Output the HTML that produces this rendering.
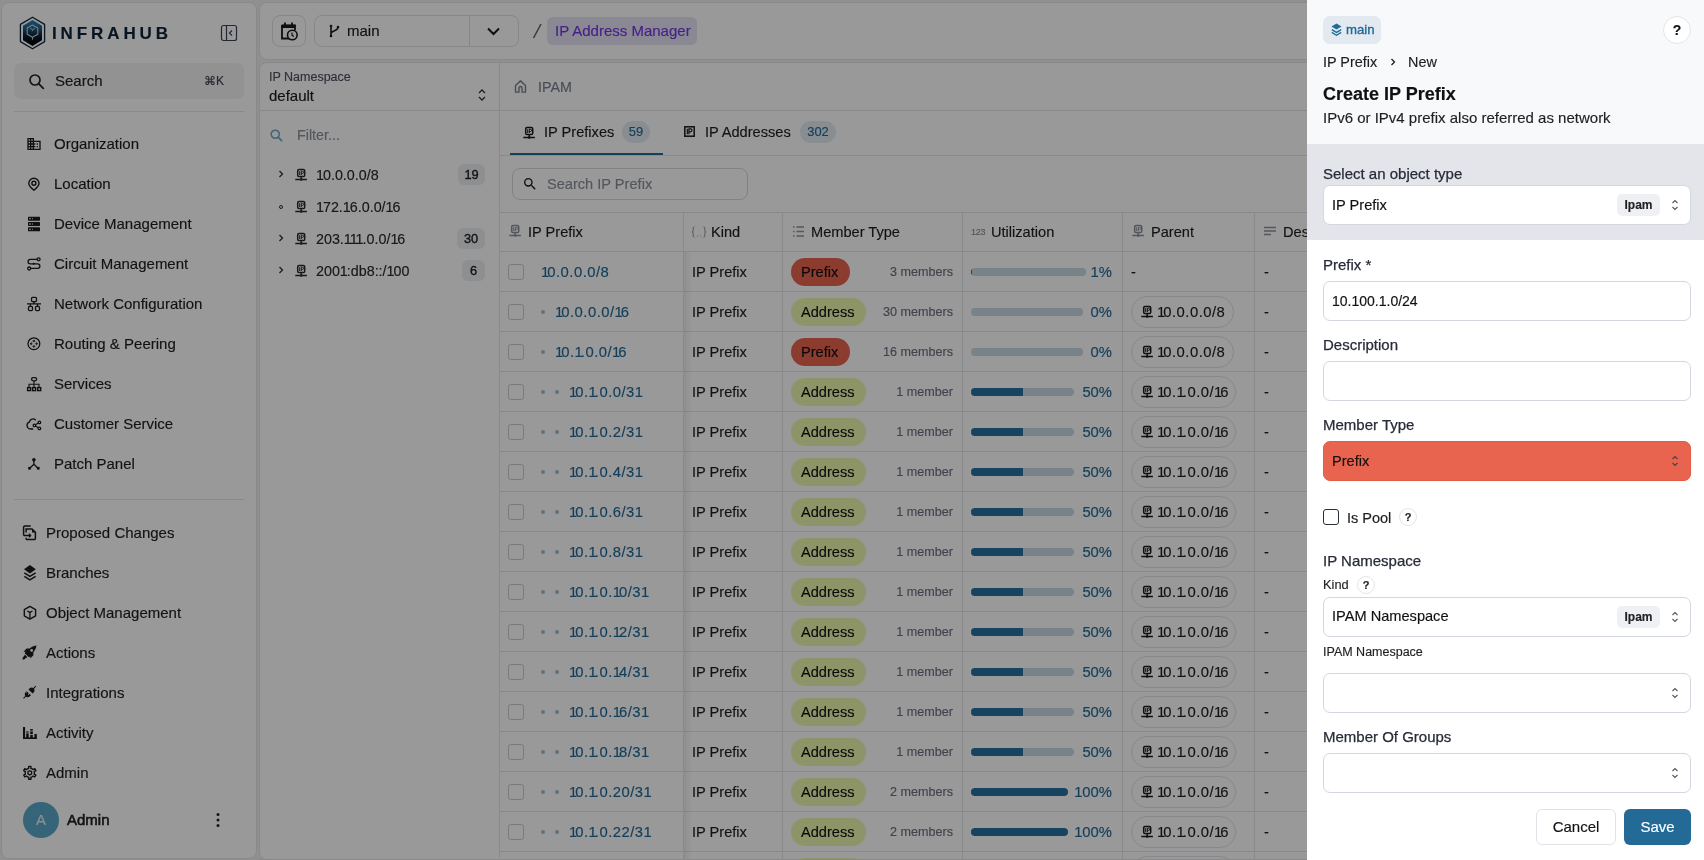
<!DOCTYPE html>
<html><head><meta charset="utf-8">
<style>
*{box-sizing:border-box;margin:0;padding:0}
html,body{width:1704px;height:860px;overflow:hidden}
body{font-family:"Liberation Sans",sans-serif;background:#f1f1f1;color:#1a1a1a;position:relative}
.abs{position:absolute}
#root{-webkit-text-stroke:0.15px}
.card{position:absolute;background:#fff;border:1px solid #e2e4e8;border-radius:8px}
/* sidebar */
#side{left:1px;top:2px;width:256px;height:857px}
.nav{position:absolute;left:0;height:40px;display:flex;align-items:center;font-size:15px;color:#1f1f1f;white-space:nowrap}
.nav svg{position:absolute}
/* overlay */
#ov{position:absolute;left:0;top:0;width:1307px;height:860px;background:rgba(0,0,0,0.4)}
#panel{position:absolute;left:1307px;top:0;width:397px;height:860px;background:#fff}
.lbl{font-size:15px;line-height:20px;color:#272b38;-webkit-text-stroke:0.25px #272b38;white-space:nowrap}
.sel{width:368px;border:1px solid #d5d7e0;border-radius:7px;background:#fff}
.ipam{width:43px;height:22px;border-radius:5px;background:#eef0f4;font-size:12px;font-weight:bold;line-height:22px;text-align:center;color:#222}
.qm{width:18px;height:18px;border-radius:50%;border:1px solid #e3e5ea;background:#fff;font-size:11px;font-weight:bold;line-height:16px;text-align:center;color:#222}
.n1{letter-spacing:-2px}
.tr .n1{letter-spacing:-1px}
.tr{left:316px;font-size:14.3px;line-height:20px;color:#2a2a2a}
.tb{height:21px;border-radius:6px;background:#eceef1;font-size:12.8px;-webkit-text-stroke:0.35px #222;line-height:21px;text-align:center;color:#222}
</style></head><body><div id="root" style="position:absolute;left:0;top:0;width:1704px;height:860px;will-change:transform">

<!-- SIDEBAR -->
<div class="card" id="side"></div>
<svg class="abs" style="left:19px;top:16px" width="27" height="34" viewBox="0 0 27 34">
  <defs><linearGradient id="lg" x1="0" y1="0" x2="0" y2="1"><stop offset="0" stop-color="#2c80b8"/><stop offset="0.3" stop-color="#1f618f"/><stop offset="0.62" stop-color="#0b1c2e"/><stop offset="1" stop-color="#000"/></linearGradient></defs>
  <polygon points="13.5,1.2 25.6,8.4 25.6,25.6 13.5,32.8 1.4,25.6 1.4,8.4" fill="none" stroke="#10263e" stroke-width="1.3" stroke-linejoin="round"/>
  <polygon points="13.5,4 23,9.8 23,24.2 13.5,30 4,24.2 4,9.8" fill="url(#lg)"/>
  <path d="M13.5 9 L18.8 12 L18.8 18.2 L13.5 21.2 L8.2 18.2 L8.2 12 Z" fill="none" stroke="#c9d2da" stroke-width="1.1" stroke-linejoin="round"/><path d="M11 12.3 L13.5 13.6 L16 12.3 M13.5 13.6 V15" fill="none" stroke="#c9d2da" stroke-width="0.9"/>
  <path d="M13.5 21.2 V23.6" fill="none" stroke="#c9d2da" stroke-width="1.1"/>
</svg>
<div class="abs" style="left:52px;top:24px;font-size:17px;font-weight:bold;letter-spacing:3.9px;color:#0d2237;line-height:20px">INFRAHUB</div>
<svg class="abs" style="left:220px;top:24px" width="18" height="18" viewBox="0 0 18 18"><rect x="1.5" y="1.5" width="15" height="15" rx="2" fill="none" stroke="#3d4152" stroke-width="1.2"/><path d="M6.5 1.5 V16.5" stroke="#3d4152" stroke-width="1.2"/><path d="M12 6.5 L9.5 9 L12 11.5" fill="none" stroke="#3d4152" stroke-width="1.2"/></svg>

<div class="abs" style="left:14px;top:63px;width:230px;height:36px;background:#f4f4f5;border-radius:7px"></div>
<svg class="abs" style="left:28px;top:73px" width="17" height="17" viewBox="0 0 17 17"><circle cx="7" cy="7" r="5" fill="none" stroke="#222" stroke-width="1.7"/><path d="M10.8 10.8L15.3 15.3" stroke="#222" stroke-width="1.8" stroke-linecap="round"/></svg>
<div class="abs" style="left:55px;top:71px;font-size:15px;line-height:20px;color:#222">Search</div>
<div class="abs" style="left:204px;top:73px;font-size:12px;line-height:16px;color:#3e4250">&#8984;K</div>
<div class="abs" style="left:14px;top:111px;width:230px;height:1px;background:#e2e4e8"></div>

<div class="nav" style="top:123px;left:54px">Organization</div>
<div class="nav" style="top:163px;left:54px">Location</div>
<div class="nav" style="top:203px;left:54px">Device Management</div>
<div class="nav" style="top:243px;left:54px">Circuit Management</div>
<div class="nav" style="top:283px;left:54px">Network Configuration</div>
<div class="nav" style="top:323px;left:54px">Routing &amp; Peering</div>
<div class="nav" style="top:363px;left:54px">Services</div>
<div class="nav" style="top:403px;left:54px">Customer Service</div>
<div class="nav" style="top:443px;left:54px">Patch Panel</div>

<!-- upper icons -->
<svg class="abs" style="left:26px;top:136px" width="16" height="16" viewBox="0 0 24 24"><path d="M18 15h-2v2h2m0-6h-2v2h2m2 6h-8v-2h2v-2h-2v-2h2v-2h-2V9h8M10 7H8V5h2m0 6H8V9h2m0 6H8v-2h2m0 6H8v-2h2M6 7H4V5h2m0 6H4V9h2m0 6H4v-2h2m0 6H4v-2h2m6-10V3H2v18h20V7H12z" fill="#1c1c1c"/></svg>
<svg class="abs" style="left:20px;top:172px" width="24" height="24" viewBox="0 0 24 24"><path d="M13.9 18.3C11 16 8.8 14 8.8 11.3A5.1 5.1 0 0 1 19 11.3C19 14 16.8 16 13.9 18.3Z" fill="none" stroke="#1c1c1c" stroke-width="1.4" stroke-linejoin="round"/><circle cx="13.9" cy="11.3" r="2" fill="none" stroke="#1c1c1c" stroke-width="1.4"/></svg>
<svg class="abs" style="left:26px;top:216px" width="16" height="16" viewBox="0 0 24 24"><path d="M4 1h16a1 1 0 0 1 1 1v4a1 1 0 0 1-1 1H4a1 1 0 0 1-1-1V2a1 1 0 0 1 1-1m0 8h16a1 1 0 0 1 1 1v4a1 1 0 0 1-1 1H4a1 1 0 0 1-1-1v-4a1 1 0 0 1 1-1m0 8h16a1 1 0 0 1 1 1v4a1 1 0 0 1-1 1H4a1 1 0 0 1-1-1v-4a1 1 0 0 1 1-1M9 5h1V3H9v2m0 8h1v-2H9v2m0 8h1v-2H9v2M5 3v2h2V3H5m0 8v2h2v-2H5m0 8v2h2v-2H5z" fill="#1c1c1c"/></svg>
<svg class="abs" style="left:20px;top:252px" width="24" height="24" viewBox="0 0 24 24"><circle cx="18.6" cy="7.3" r="1.5" fill="none" stroke="#1c1c1c" stroke-width="1.3"/><path d="M17.1 7.3H10.3A2.25 2.25 0 0 0 10.3 11.8H17.6A2.3 2.3 0 0 1 17.6 16.4H10.7" fill="none" stroke="#1c1c1c" stroke-width="1.3"/><circle cx="9.2" cy="16.5" r="1.5" fill="none" stroke="#1c1c1c" stroke-width="1.3"/><path d="M13.8 10.5L15.1 11.8 13.8 13.1 12.5 11.8Z" fill="#1c1c1c"/></svg>
<svg class="abs" style="left:20px;top:292px" width="24" height="24" viewBox="0 0 24 24"><rect x="11.5" y="5.4" width="5" height="4.2" rx="1.1" fill="none" stroke="#1c1c1c" stroke-width="1.3"/><path d="M14 9.6V11.8M7 11.9H21" stroke="#1c1c1c" stroke-width="1.4"/><path d="M10.4 11.9V14.2M17.5 11.9V14.2" stroke="#1c1c1c" stroke-width="1.2"/><rect x="8.5" y="14.4" width="4" height="4.2" rx="1.1" fill="none" stroke="#1c1c1c" stroke-width="1.3"/><rect x="15.5" y="14.4" width="4" height="4.2" rx="1.1" fill="none" stroke="#1c1c1c" stroke-width="1.3"/></svg>
<svg class="abs" style="left:20px;top:332px" width="24" height="24" viewBox="0 0 24 24"><circle cx="13.9" cy="11.7" r="5.9" fill="none" stroke="#1c1c1c" stroke-width="1.3"/><path d="M13.9 7.9l1.2 1.3h-2.4zM13.9 15.5l-1.2-1.3h2.4zM10.1 11.7l1.3-1.2v2.4zM17.7 11.7l-1.3 1.2v-2.4z" fill="#1c1c1c" stroke="#1c1c1c" stroke-width="0.6"/><path d="M13.9 9.2v1M13.9 13.2v1M11.4 11.7h1M15.4 11.7h1" stroke="#1c1c1c" stroke-width="1"/></svg>
<svg class="abs" style="left:20px;top:372px" width="24" height="24" viewBox="0 0 24 24"><rect x="11.6" y="5.6" width="5" height="3.2" rx="1.5" fill="none" stroke="#1c1c1c" stroke-width="1.3"/><path d="M14 8.8V15M9 15.4V12.2H19V15.4" fill="none" stroke="#1c1c1c" stroke-width="1.1"/><rect x="7.6" y="15.6" width="3" height="3" fill="none" stroke="#1c1c1c" stroke-width="1.4"/><rect x="12.6" y="15.6" width="3" height="3" fill="none" stroke="#1c1c1c" stroke-width="1.4"/><rect x="17.7" y="15.6" width="3" height="3" fill="none" stroke="#1c1c1c" stroke-width="1.4"/></svg>
<svg class="abs" style="left:20px;top:412px" width="24" height="24" viewBox="0 0 24 24"><path d="M15.8 8.2C14.6 7 12.5 6.7 11 7.6 10.2 8.1 9.7 9 9.5 9.8 8 10.5 6.9 12 7 13.5 7.2 15.5 8.6 16.8 10.5 17H13.2" fill="none" stroke="#1c1c1c" stroke-width="1.3"/><circle cx="19.4" cy="10.4" r="1.3" fill="none" stroke="#1c1c1c" stroke-width="1.2"/><circle cx="14.4" cy="13.4" r="1.3" fill="none" stroke="#1c1c1c" stroke-width="1.2"/><circle cx="19.4" cy="16.4" r="1.3" fill="none" stroke="#1c1c1c" stroke-width="1.2"/><path d="M15.5 12.7L18.3 11.1M15.5 14.1L18.3 15.7" stroke="#1c1c1c" stroke-width="1.1"/></svg>
<svg class="abs" style="left:20px;top:452px" width="24" height="24" viewBox="0 0 24 24"><circle cx="13.9" cy="7.7" r="1.8" fill="#1c1c1c"/><path d="M13.9 8.5V12.3L9.8 16.2M13.9 12.3L18 16.2" fill="none" stroke="#1c1c1c" stroke-width="1.3"/><rect x="8.2" y="14.9" width="2.7" height="2.7" fill="#1c1c1c"/><rect x="16.9" y="14.9" width="2.7" height="2.7" fill="#1c1c1c"/></svg>
<div class="abs" style="left:14px;top:499px;width:230px;height:1px;background:#e2e4e8"></div>

<div class="nav" style="top:512px;left:46px">Proposed Changes</div>
<div class="nav" style="top:552px;left:46px">Branches</div>
<div class="nav" style="top:592px;left:46px">Object Management</div>
<div class="nav" style="top:632px;left:46px">Actions</div>
<div class="nav" style="top:672px;left:46px">Integrations</div>
<div class="nav" style="top:712px;left:46px">Activity</div>
<div class="nav" style="top:752px;left:46px">Admin</div>
<svg class="abs" style="left:20px;top:520px" width="24" height="24" viewBox="0 0 24 24"><path d="M3.6 15.4V7.2A1.1 1.1 0 0 1 4.7 6.1H10.7" fill="none" stroke="#1c1c1c" stroke-width="1.5"/><path d="M6.1 12.6V9H12L15.4 12.4V18.4A1.1 1.1 0 0 1 14.3 19.5H7.2A1.1 1.1 0 0 1 6.1 18.4V17.8" fill="none" stroke="#1c1c1c" stroke-width="1.5"/><path d="M12 9L15.4 12.4H12Z" fill="#1c1c1c"/><path d="M3.6 15.5H10.6" stroke="#1c1c1c" stroke-width="1.5"/><path d="M9.2 13.7L11.2 15.5 9.2 17.3Z" fill="#1c1c1c" stroke="#1c1c1c" stroke-width="0.8"/></svg>
<svg class="abs" style="left:20px;top:560px" width="24" height="24" viewBox="0 0 24 24"><path d="M9.9 5L15.8 9.2 9.9 13.4 4 9.2Z" fill="#1c1c1c"/><path d="M4.3 12.9L9.9 16.4 15.6 12.9M4.3 16.4L9.9 19.9 15.6 16.4" fill="none" stroke="#1c1c1c" stroke-width="1.5"/></svg>
<svg class="abs" style="left:20px;top:600px" width="24" height="24" viewBox="0 0 24 24"><path d="M9.9 6.4L15.6 9.6V15.9L9.9 19.1 4.3 15.9V9.6Z" fill="none" stroke="#1c1c1c" stroke-width="1.4" stroke-linejoin="round"/><path d="M7.3 11L9.9 12.4 12.5 11M9.9 12.4V18.6" fill="none" stroke="#1c1c1c" stroke-width="1.3"/></svg>
<svg class="abs" style="left:21px;top:644px" width="17" height="17" viewBox="0 0 24 24"><path d="M13.1 17.4c-1.1.9-2 1.4-2 1.4l-5.9-5.9s.5-.9 1.4-2H3.5L8 6.5h4.5C16.7 2.4 21.8 2.2 21.8 2.2s-.2 5.1-4.3 9.3v4.5L13 20.5zM15 7a2 2 0 1 0 0 4 2 2 0 0 0 0-4zM5.5 15l3.5 3.5-4.8 3.3H2.2v-2z" fill="#1c1c1c"/></svg>
<svg class="abs" style="left:21px;top:684px" width="17" height="17" viewBox="0 0 24 24"><path d="M21.4 3.6l-1-1-3 3c-1.7-1.1-4-.9-5.5.6L10.5 7.6l5.9 5.9 1.4-1.4c1.5-1.5 1.7-3.8.6-5.5zM8 10l-1.4 1.4c-1.5 1.5-1.700 3.8-.6 5.5l-3 3 1 1 3-3c1.7 1.1 4 .9 5.5-.6L14 15.9l-2-2-1.5 1.5-1-1 1.5-1.5-1.900-1.900-1.5 1.5-1-1L9 9.9z" fill="#1c1c1c"/></svg>
<svg class="abs" style="left:20px;top:720px" width="24" height="24" viewBox="0 0 24 24"><rect x="3" y="7" width="2.1" height="12" fill="#1c1c1c"/><rect x="3" y="17.4" width="13.8" height="1.6" fill="#1c1c1c"/><rect x="6.2" y="11.4" width="2.5" height="1.2" fill="#1c1c1c"/><rect x="6.2" y="13.4" width="2.5" height="5" fill="#1c1c1c"/><rect x="10.2" y="9" width="2.6" height="1.6" fill="#1c1c1c"/><rect x="10.2" y="11.4" width="2.6" height="2.6" fill="#1c1c1c"/><rect x="10.2" y="14.8" width="2.6" height="3.5" fill="#1c1c1c"/><rect x="14.4" y="14" width="2.4" height="4.5" fill="#1c1c1c"/></svg>
<svg class="abs" style="left:20px;top:760px" width="24" height="24" viewBox="0 0 24 24"><path d="M7.50 8.82 L8.69 8.34 L8.67 6.40 L10.93 6.40 L10.91 8.34 L12.10 8.82 L13.11 9.60 L14.78 8.62 L15.91 10.58 L14.22 11.53 L14.40 12.80 L14.22 14.07 L15.91 15.02 L14.78 16.98 L13.11 16.00 L12.10 16.78 L10.91 17.26 L10.93 19.20 L8.67 19.20 L8.69 17.26 L7.50 16.78 L6.49 16.00 L4.82 16.98 L3.69 15.02 L5.38 14.07 L5.20 12.80 L5.38 11.53 L3.69 10.58 L4.82 8.62 L6.49 9.60Z" fill="none" stroke="#1c1c1c" stroke-width="1.4" stroke-linejoin="round"/><path d="M11.62 13.85 L9.80 14.90 L7.98 13.85 L7.98 11.75 L9.80 10.70 L11.62 11.75Z" fill="none" stroke="#1c1c1c" stroke-width="1.3"/></svg>

<div class="abs" style="left:23px;top:802px;width:36px;height:36px;border-radius:50%;background:#5aa7c9;color:#e6eef2;font-size:15px;line-height:36px;text-align:center">A</div>
<div class="abs" style="left:67px;top:810px;font-size:15px;line-height:20px;color:#1f1f1f;-webkit-text-stroke:0.55px #1f1f1f">Admin</div>
<svg class="abs" style="left:210px;top:811px" width="16" height="18" viewBox="0 0 16 18"><circle cx="8" cy="3.5" r="1.5" fill="#222"/><circle cx="8" cy="9" r="1.5" fill="#222"/><circle cx="8" cy="14.5" r="1.5" fill="#222"/></svg>

<!-- TOP BAR -->
<div class="card" style="left:259px;top:2px;width:1443px;height:58px"></div>
<div class="abs" style="left:272px;top:15px;width:34px;height:32px;border:1px solid #dfe1e6;border-radius:8px"></div>
<svg class="abs" style="left:280px;top:21px" width="19" height="20" viewBox="0 0 19 20"><path d="M2 4.5h13v4.8" fill="none" stroke="#1a1a1a" stroke-width="1.8"/><rect x="1.5" y="3.8" width="13.5" height="3.2" fill="#1a1a1a"/><path d="M2 4v13.5h8" fill="none" stroke="#1a1a1a" stroke-width="1.8"/><path d="M5 1.5v3M12 1.5v3" stroke="#1a1a1a" stroke-width="1.8"/><circle cx="12.3" cy="14" r="4.8" fill="#fff" stroke="#1a1a1a" stroke-width="1.6"/><path d="M12 11.5v2.6l1.8 1.3" fill="none" stroke="#1a1a1a" stroke-width="1.2"/></svg>
<div class="abs" style="left:314px;top:15px;width:205px;height:32px;border:1px solid #dfe1e6;border-radius:8px"></div>
<div class="abs" style="left:469px;top:16px;width:1px;height:30px;background:#dfe1e6"></div>
<svg class="abs" style="left:327px;top:24px" width="14" height="14" viewBox="0 0 14 14"><circle cx="4" cy="2" r="1.3" fill="#1a1a1a"/><circle cx="4" cy="12" r="1.3" fill="#1a1a1a"/><circle cx="11" cy="3" r="1.3" fill="#1a1a1a"/><path d="M4 2v10M4 9.5c0-3 7-2 7-6.5" fill="none" stroke="#1a1a1a" stroke-width="1.6"/></svg>
<div class="abs" style="left:347px;top:21px;font-size:15px;line-height:20px;color:#1a1a1a">main</div>
<svg class="abs" style="left:486px;top:26px" width="15" height="10" viewBox="0 0 15 10"><path d="M2 2.5l5.5 5.5 5.5-5.5" fill="none" stroke="#1a1a1a" stroke-width="2"/></svg>
<svg class="abs" style="left:531px;top:22px" width="12" height="18" viewBox="0 0 12 18"><path d="M10 2L2.5 16" stroke="#5c6070" stroke-width="1.5"/></svg>
<div class="abs" style="left:547px;top:17px;width:150px;height:28px;background:#e6e3f3;border-radius:6px"></div>
<div class="abs" style="left:555px;top:21px;font-size:15px;line-height:20px;color:#7436e8">IP Address Manager</div>

<!-- CONTENT CARD -->
<div class="card" style="left:259px;top:62px;width:1443px;height:798px"></div>
<!-- tree panel -->
<div class="abs" style="left:269px;top:69px;font-size:12.5px;line-height:16px;color:#4b5060">IP Namespace</div>
<div class="abs" style="left:269px;top:86px;font-size:15px;line-height:20px;color:#1a1a1a">default</div>
<svg class="abs" style="left:476px;top:88px" width="12" height="14" viewBox="0 0 12 14"><path d="M3 5l3-3 3 3M3 9l3 3 3-3" fill="none" stroke="#333" stroke-width="1.3"/></svg>
<div class="abs" style="left:260px;top:110px;width:239px;height:1px;background:#e2e4e8"></div>
<div class="abs" style="left:499px;top:63px;width:1px;height:795px;background:#e2e4e8"></div>
<svg class="abs" style="left:269px;top:128px" width="15" height="15" viewBox="0 0 24 24"><circle cx="10" cy="10" r="6.5" fill="none" stroke="#6aa8c4" stroke-width="2.4"/><path d="M15 15l6 6" stroke="#6aa8c4" stroke-width="2.6"/></svg>
<div class="abs" style="left:297px;top:126px;font-size:14.3px;line-height:18px;color:#8a8f9a">Filter...</div>

<!--TREE-->
<svg class="abs" style="left:277px;top:169px" width="8" height="10" viewBox="0 0 8 10"><path d="M2.5 2l3 3-3 3" fill="none" stroke="#333" stroke-width="1.3"/></svg>
<div class="abs" style="left:279px;top:205px;width:4px;height:4px;border:1px solid #333;border-radius:50%"></div>
<svg class="abs" style="left:277px;top:233px" width="8" height="10" viewBox="0 0 8 10"><path d="M2.5 2l3 3-3 3" fill="none" stroke="#333" stroke-width="1.3"/></svg>
<svg class="abs" style="left:277px;top:265px" width="8" height="10" viewBox="0 0 8 10"><path d="M2.5 2l3 3-3 3" fill="none" stroke="#333" stroke-width="1.3"/></svg>
<svg class="abs" style="left:295px;top:168px" width="12" height="13" viewBox="0 0 12 13"><rect x="2.7" y="1.4" width="7" height="7.2" rx="1.3" fill="none" stroke="#2a2a2a" stroke-width="1.5"/><path d="M4.7 3.2v3.8M6.3 7V3.2h1.1a1.1 1.1 0 0 1 0 2.3H6.3" fill="none" stroke="#2a2a2a" stroke-width="1"/><path d="M6.2 8.6v3M0.3 11.5h11.6" stroke="#2a2a2a" stroke-width="1.3"/><circle cx="6.2" cy="11.5" r="1.3" fill="#2a2a2a"/></svg>
<svg class="abs" style="left:295px;top:200px" width="12" height="13" viewBox="0 0 12 13"><rect x="2.7" y="1.4" width="7" height="7.2" rx="1.3" fill="none" stroke="#2a2a2a" stroke-width="1.5"/><path d="M4.7 3.2v3.8M6.3 7V3.2h1.1a1.1 1.1 0 0 1 0 2.3H6.3" fill="none" stroke="#2a2a2a" stroke-width="1"/><path d="M6.2 8.6v3M0.3 11.5h11.6" stroke="#2a2a2a" stroke-width="1.3"/><circle cx="6.2" cy="11.5" r="1.3" fill="#2a2a2a"/></svg>
<svg class="abs" style="left:295px;top:232px" width="12" height="13" viewBox="0 0 12 13"><rect x="2.7" y="1.4" width="7" height="7.2" rx="1.3" fill="none" stroke="#2a2a2a" stroke-width="1.5"/><path d="M4.7 3.2v3.8M6.3 7V3.2h1.1a1.1 1.1 0 0 1 0 2.3H6.3" fill="none" stroke="#2a2a2a" stroke-width="1"/><path d="M6.2 8.6v3M0.3 11.5h11.6" stroke="#2a2a2a" stroke-width="1.3"/><circle cx="6.2" cy="11.5" r="1.3" fill="#2a2a2a"/></svg>
<svg class="abs" style="left:295px;top:264px" width="12" height="13" viewBox="0 0 12 13"><rect x="2.7" y="1.4" width="7" height="7.2" rx="1.3" fill="none" stroke="#2a2a2a" stroke-width="1.5"/><path d="M4.7 3.2v3.8M6.3 7V3.2h1.1a1.1 1.1 0 0 1 0 2.3H6.3" fill="none" stroke="#2a2a2a" stroke-width="1"/><path d="M6.2 8.6v3M0.3 11.5h11.6" stroke="#2a2a2a" stroke-width="1.3"/><circle cx="6.2" cy="11.5" r="1.3" fill="#2a2a2a"/></svg>
<div class="abs tr" style="top:165px"><span class="n1">1</span>0.0.0.0/8</div>
<div class="abs tr" style="top:197px"><span class="n1">1</span>72.<span class="n1">1</span>6.0.0/<span class="n1">1</span>6</div>
<div class="abs tr" style="top:229px">203.<span class="n1">1</span><span class="n1">1</span><span class="n1">1</span>.0.0/<span class="n1">1</span>6</div>
<div class="abs tr" style="top:261px">200<span class="n1">1</span>:db8::/<span class="n1">1</span>00</div>
<div class="abs tb" style="left:458px;top:164px;width:27px">19</div>
<div class="abs tb" style="left:457px;top:228px;width:28px">30</div>
<div class="abs tb" style="left:462px;top:260px;width:23px">6</div>

<!--MAIN-->
<svg class="abs" style="left:513px;top:79px" width="15" height="15" viewBox="0 0 24 24"><path d="M4 21V10.5L12 3l8 7.5V21h-5.5v-6.5a2.5 2.5 0 0 0-5 0V21z" fill="none" stroke="#7c8190" stroke-width="2.2" stroke-linejoin="round"/></svg>
<div class="abs" style="left:538px;top:77px;font-size:14.3px;line-height:20px;color:#7c8190">IPAM</div>
<div class="abs" style="left:500px;top:110px;width:1202px;height:1px;background:#e2e4e8"></div>
<svg class="abs" style="left:523px;top:126px" width="12" height="13" viewBox="0 0 12 13"><rect x="2.7" y="1.4" width="7" height="7.2" rx="1.3" fill="none" stroke="#1a1a1a" stroke-width="1.5"/><path d="M4.7 3.2v3.8M6.3 7V3.2h1.1a1.1 1.1 0 0 1 0 2.3H6.3" fill="none" stroke="#1a1a1a" stroke-width="1"/><path d="M6.2 8.6v3M0.3 11.5h11.6" stroke="#1a1a1a" stroke-width="1.3"/><circle cx="6.2" cy="11.5" r="1.3" fill="#1a1a1a"/></svg>
<div class="abs" style="left:544px;top:122px;font-size:14.6px;line-height:20px;color:#1f1f1f">IP Prefixes</div>
<div class="abs" style="left:622px;top:121px;width:28px;height:22px;border-radius:11px;background:#e3ecf2;color:#236a96;font-size:12.9px;line-height:22px;text-align:center">59</div>
<svg class="abs" style="left:684px;top:126px" width="11" height="11" viewBox="0 0 11 11"><rect x="0.8" y="0.8" width="9.4" height="9.4" fill="none" stroke="#1a1a1a" stroke-width="1.5"/><path d="M3.3 2.8v5.4M4.9 8.2V2.8h1.6a1.5 1.5 0 0 1 0 3H4.9" fill="none" stroke="#1a1a1a" stroke-width="1.2"/></svg>
<div class="abs" style="left:705px;top:122px;font-size:14.6px;line-height:20px;color:#1f1f1f">IP Addresses</div>
<div class="abs" style="left:800px;top:121px;width:36px;height:22px;border-radius:11px;background:#e3ecf2;color:#236a96;font-size:12.9px;line-height:22px;text-align:center">302</div>
<div class="abs" style="left:500px;top:155px;width:1202px;height:1px;background:#e2e4e8"></div>
<div class="abs" style="left:510px;top:153px;width:153px;height:2px;background:#236a96"></div>
<div class="abs" style="left:512px;top:168px;width:236px;height:32px;border:1px solid #d6d9e0;border-radius:8px"></div>
<svg class="abs" style="left:522px;top:176px" width="16" height="16" viewBox="0 0 24 24"><path d="M9.5 3A6.5 6.5 0 0 1 16 9.5c0 1.61-.59 3.09-1.56 4.23l.27.27h.79l5 5-1.5 1.5-5-5v-.79l-.27-.27A6.516 6.516 0 0 1 9.5 16 6.5 6.5 0 0 1 3 9.5 6.5 6.5 0 0 1 9.5 3m0 2C7 5 5 7 5 9.5S7 14 9.5 14 14 12 14 9.5 12 5 9.5 5z" fill="#1a1a1a"/></svg>
<div class="abs" style="left:547px;top:174px;font-size:14.6px;line-height:20px;color:#8a8f9a">Search IP Prefix</div>
<div class="abs" style="left:500px;top:212px;width:1202px;height:1px;background:#e2e4e8"></div>
<div class="abs" style="left:500px;top:251px;width:1202px;height:1px;background:#e2e4e8"></div>
<div class="abs" style="left:500px;top:291px;width:1202px;height:1px;background:#e2e4e8"></div>
<div class="abs" style="left:500px;top:331px;width:1202px;height:1px;background:#e2e4e8"></div>
<div class="abs" style="left:500px;top:371px;width:1202px;height:1px;background:#e2e4e8"></div>
<div class="abs" style="left:500px;top:411px;width:1202px;height:1px;background:#e2e4e8"></div>
<div class="abs" style="left:500px;top:451px;width:1202px;height:1px;background:#e2e4e8"></div>
<div class="abs" style="left:500px;top:491px;width:1202px;height:1px;background:#e2e4e8"></div>
<div class="abs" style="left:500px;top:531px;width:1202px;height:1px;background:#e2e4e8"></div>
<div class="abs" style="left:500px;top:571px;width:1202px;height:1px;background:#e2e4e8"></div>
<div class="abs" style="left:500px;top:611px;width:1202px;height:1px;background:#e2e4e8"></div>
<div class="abs" style="left:500px;top:651px;width:1202px;height:1px;background:#e2e4e8"></div>
<div class="abs" style="left:500px;top:691px;width:1202px;height:1px;background:#e2e4e8"></div>
<div class="abs" style="left:500px;top:731px;width:1202px;height:1px;background:#e2e4e8"></div>
<div class="abs" style="left:500px;top:771px;width:1202px;height:1px;background:#e2e4e8"></div>
<div class="abs" style="left:500px;top:811px;width:1202px;height:1px;background:#e2e4e8"></div>
<div class="abs" style="left:500px;top:851px;width:1202px;height:1px;background:#e2e4e8"></div>
<div class="abs" style="left:500px;top:891px;width:1202px;height:1px;background:#e2e4e8"></div>
<div class="abs" style="left:683px;top:212px;width:1px;height:648px;background:#e2e4e8"></div>
<div class="abs" style="left:782px;top:212px;width:1px;height:648px;background:#e2e4e8"></div>
<div class="abs" style="left:962px;top:212px;width:1px;height:648px;background:#e2e4e8"></div>
<div class="abs" style="left:1122px;top:212px;width:1px;height:648px;background:#e2e4e8"></div>
<div class="abs" style="left:1254px;top:212px;width:1px;height:648px;background:#e2e4e8"></div>
<div class="abs" style="left:684px;top:252px;width:8px;height:608px;background:linear-gradient(90deg,rgba(0,0,0,0.07),rgba(0,0,0,0))"></div>
<svg class="abs" style="left:509px;top:224px" width="12" height="13" viewBox="0 0 12 13"><rect x="2.7" y="1.4" width="7" height="7.2" rx="1.3" fill="none" stroke="#8a8f9a" stroke-width="1.5"/><path d="M4.7 3.2v3.8M6.3 7V3.2h1.1a1.1 1.1 0 0 1 0 2.3H6.3" fill="none" stroke="#8a8f9a" stroke-width="1"/><path d="M6.2 8.6v3M0.3 11.5h11.6" stroke="#8a8f9a" stroke-width="1.3"/><circle cx="6.2" cy="11.5" r="1.3" fill="#8a8f9a"/></svg>
<div class="abs" style="left:528px;top:222px;font-size:14.6px;line-height:20px;color:#1f1f1f">IP Prefix</div>
<svg class="abs" style="left:691px;top:226px" width="16" height="12" viewBox="0 0 16 12"><path d="M3.5 0.8C2.2 0.8 2.2 1.6 2.2 3V4.6C2.2 5.5 1.8 6 1 6 1.8 6 2.2 6.5 2.2 7.4V9C2.2 10.4 2.2 11.2 3.5 11.2M12.5 0.8C13.8 0.8 13.8 1.6 13.8 3V4.6C13.8 5.5 14.2 6 15 6 14.2 6 13.8 6.5 13.8 7.4V9C13.8 10.4 13.8 11.2 12.5 11.2" fill="none" stroke="#8a8f9a" stroke-width="1"/><path d="M6 10h0.8M9.2 10h0.8" stroke="#8a8f9a" stroke-width="1"/></svg>
<div class="abs" style="left:711px;top:222px;font-size:14.6px;line-height:20px;color:#1f1f1f">Kind</div>
<svg class="abs" style="left:792px;top:225px" width="13" height="13" viewBox="0 0 13 13"><path d="M1 2h1.5M1 6.5h1.5M1 11h1.5M4.5 2H12M4.5 6.5H12M4.5 11H12" stroke="#8a8f9a" stroke-width="1.3"/></svg>
<div class="abs" style="left:811px;top:222px;font-size:14.6px;line-height:20px;color:#1f1f1f">Member Type</div>
<div class="abs" style="left:971px;top:226px;font-size:9px;line-height:12px;color:#8a8f9a;letter-spacing:-0.3px">123</div>
<div class="abs" style="left:991px;top:222px;font-size:14.6px;line-height:20px;color:#1f1f1f">Utilization</div>
<svg class="abs" style="left:1132px;top:224px" width="12" height="13" viewBox="0 0 12 13"><rect x="2.7" y="1.4" width="7" height="7.2" rx="1.3" fill="none" stroke="#8a8f9a" stroke-width="1.5"/><path d="M4.7 3.2v3.8M6.3 7V3.2h1.1a1.1 1.1 0 0 1 0 2.3H6.3" fill="none" stroke="#8a8f9a" stroke-width="1"/><path d="M6.2 8.6v3M0.3 11.5h11.6" stroke="#8a8f9a" stroke-width="1.3"/><circle cx="6.2" cy="11.5" r="1.3" fill="#8a8f9a"/></svg>
<div class="abs" style="left:1151px;top:222px;font-size:14.6px;line-height:20px;color:#1f1f1f">Parent</div>
<svg class="abs" style="left:1264px;top:226px" width="12" height="10" viewBox="0 0 12 10"><path d="M0 1.5h12M0 5h12M0 8.5h7" stroke="#8a8f9a" stroke-width="1.3"/></svg>
<div class="abs" style="left:1283px;top:222px;font-size:14.6px;line-height:20px;color:#1f1f1f">Description</div>
<div class="abs" style="left:508px;top:264px;width:16px;height:16px;border:1px solid #c9ccd3;border-radius:3px;background:#fff"></div>
<div class="abs" style="left:541px;top:262px;font-size:14.8px;line-height:20px;letter-spacing:0.5px;color:#236a96"><span class="n1">1</span>0.0.0.0/8</div>
<div class="abs" style="left:692px;top:262px;font-size:14.6px;line-height:20px;color:#1f1f1f">IP Prefix</div>
<div class="abs" style="left:791px;top:258px;width:59px;height:28px;border-radius:14px;background:#e8644f;color:#111;font-size:14.6px;line-height:28px;padding-left:10px">Prefix</div>
<div class="abs" style="left:853px;top:264px;width:100px;text-align:right;font-size:12.6px;line-height:16px;color:#6b7080">3 members</div>
<div class="abs" style="left:971px;top:268px;width:115px;height:8px;border-radius:4px;background:#c9d9e4;overflow:hidden"><div style="width:1%;height:8px;background:#26709e"></div></div>
<div class="abs" style="left:1052px;top:262px;width:60px;text-align:right;font-size:14.8px;line-height:20px;color:#236a96">1%</div>
<div class="abs" style="left:1131px;top:262px;font-size:14.6px;line-height:20px;color:#1f1f1f">-</div>
<div class="abs" style="left:1264px;top:262px;font-size:14.6px;line-height:20px;color:#1f1f1f">-</div>
<div class="abs" style="left:508px;top:304px;width:16px;height:16px;border:1px solid #c9ccd3;border-radius:3px;background:#fff"></div>
<div class="abs" style="left:541px;top:310px;width:4px;height:4px;border-radius:2px;background:#9cc0d4"></div>
<div class="abs" style="left:555px;top:302px;font-size:14.8px;line-height:20px;letter-spacing:0.5px;color:#236a96"><span class="n1">1</span>0.0.0.0/<span class="n1">1</span>6</div>
<div class="abs" style="left:692px;top:302px;font-size:14.6px;line-height:20px;color:#1f1f1f">IP Prefix</div>
<div class="abs" style="left:791px;top:298px;width:75px;height:28px;border-radius:14px;background:#ebf9ad;color:#111;font-size:14.6px;line-height:28px;padding-left:10px">Address</div>
<div class="abs" style="left:853px;top:304px;width:100px;text-align:right;font-size:12.6px;line-height:16px;color:#6b7080">30 members</div>
<div class="abs" style="left:971px;top:308px;width:112px;height:8px;border-radius:4px;background:#c9d9e4;overflow:hidden"><div style="width:0%;height:8px;background:#26709e"></div></div>
<div class="abs" style="left:1052px;top:302px;width:60px;text-align:right;font-size:14.8px;line-height:20px;color:#236a96">0%</div>
<div class="abs" style="left:1131px;top:296px;width:103px;height:32px;border:1px solid #e0e3e8;border-radius:16px"></div>
<svg class="abs" style="left:1141px;top:305px" width="12" height="13" viewBox="0 0 12 13"><rect x="2.7" y="1.4" width="7" height="7.2" rx="1.3" fill="none" stroke="#1a1a1a" stroke-width="1.5"/><path d="M4.7 3.2v3.8M6.3 7V3.2h1.1a1.1 1.1 0 0 1 0 2.3H6.3" fill="none" stroke="#1a1a1a" stroke-width="1"/><path d="M6.2 8.6v3M0.3 11.5h11.6" stroke="#1a1a1a" stroke-width="1.3"/><circle cx="6.2" cy="11.5" r="1.3" fill="#1a1a1a"/></svg>
<div class="abs" style="left:1157px;top:302px;font-size:14.8px;line-height:20px;letter-spacing:0.5px;color:#1f1f1f"><span class="n1">1</span>0.0.0.0/8</div>
<div class="abs" style="left:1264px;top:302px;font-size:14.6px;line-height:20px;color:#1f1f1f">-</div>
<div class="abs" style="left:508px;top:344px;width:16px;height:16px;border:1px solid #c9ccd3;border-radius:3px;background:#fff"></div>
<div class="abs" style="left:541px;top:350px;width:4px;height:4px;border-radius:2px;background:#9cc0d4"></div>
<div class="abs" style="left:555px;top:342px;font-size:14.8px;line-height:20px;letter-spacing:0.5px;color:#236a96"><span class="n1">1</span>0.<span class="n1">1</span>.0.0/<span class="n1">1</span>6</div>
<div class="abs" style="left:692px;top:342px;font-size:14.6px;line-height:20px;color:#1f1f1f">IP Prefix</div>
<div class="abs" style="left:791px;top:338px;width:59px;height:28px;border-radius:14px;background:#e8644f;color:#111;font-size:14.6px;line-height:28px;padding-left:10px">Prefix</div>
<div class="abs" style="left:853px;top:344px;width:100px;text-align:right;font-size:12.6px;line-height:16px;color:#6b7080">16 members</div>
<div class="abs" style="left:971px;top:348px;width:112px;height:8px;border-radius:4px;background:#c9d9e4;overflow:hidden"><div style="width:0%;height:8px;background:#26709e"></div></div>
<div class="abs" style="left:1052px;top:342px;width:60px;text-align:right;font-size:14.8px;line-height:20px;color:#236a96">0%</div>
<div class="abs" style="left:1131px;top:336px;width:103px;height:32px;border:1px solid #e0e3e8;border-radius:16px"></div>
<svg class="abs" style="left:1141px;top:345px" width="12" height="13" viewBox="0 0 12 13"><rect x="2.7" y="1.4" width="7" height="7.2" rx="1.3" fill="none" stroke="#1a1a1a" stroke-width="1.5"/><path d="M4.7 3.2v3.8M6.3 7V3.2h1.1a1.1 1.1 0 0 1 0 2.3H6.3" fill="none" stroke="#1a1a1a" stroke-width="1"/><path d="M6.2 8.6v3M0.3 11.5h11.6" stroke="#1a1a1a" stroke-width="1.3"/><circle cx="6.2" cy="11.5" r="1.3" fill="#1a1a1a"/></svg>
<div class="abs" style="left:1157px;top:342px;font-size:14.8px;line-height:20px;letter-spacing:0.5px;color:#1f1f1f"><span class="n1">1</span>0.0.0.0/8</div>
<div class="abs" style="left:1264px;top:342px;font-size:14.6px;line-height:20px;color:#1f1f1f">-</div>
<div class="abs" style="left:508px;top:384px;width:16px;height:16px;border:1px solid #c9ccd3;border-radius:3px;background:#fff"></div>
<div class="abs" style="left:541px;top:390px;width:4px;height:4px;border-radius:2px;background:#9cc0d4"></div>
<div class="abs" style="left:555px;top:390px;width:4px;height:4px;border-radius:2px;background:#9cc0d4"></div>
<div class="abs" style="left:569px;top:382px;font-size:14.8px;line-height:20px;letter-spacing:0.5px;color:#236a96"><span class="n1">1</span>0.<span class="n1">1</span>.0.0/3<span class="n1">1</span></div>
<div class="abs" style="left:692px;top:382px;font-size:14.6px;line-height:20px;color:#1f1f1f">IP Prefix</div>
<div class="abs" style="left:791px;top:378px;width:75px;height:28px;border-radius:14px;background:#ebf9ad;color:#111;font-size:14.6px;line-height:28px;padding-left:10px">Address</div>
<div class="abs" style="left:853px;top:384px;width:100px;text-align:right;font-size:12.6px;line-height:16px;color:#6b7080">1 member</div>
<div class="abs" style="left:971px;top:388px;width:103px;height:8px;border-radius:4px;background:#c9d9e4;overflow:hidden"><div style="width:50%;height:8px;background:#26709e"></div></div>
<div class="abs" style="left:1052px;top:382px;width:60px;text-align:right;font-size:14.8px;line-height:20px;color:#236a96">50%</div>
<div class="abs" style="left:1131px;top:376px;width:105px;height:32px;border:1px solid #e0e3e8;border-radius:16px"></div>
<svg class="abs" style="left:1141px;top:385px" width="12" height="13" viewBox="0 0 12 13"><rect x="2.7" y="1.4" width="7" height="7.2" rx="1.3" fill="none" stroke="#1a1a1a" stroke-width="1.5"/><path d="M4.7 3.2v3.8M6.3 7V3.2h1.1a1.1 1.1 0 0 1 0 2.3H6.3" fill="none" stroke="#1a1a1a" stroke-width="1"/><path d="M6.2 8.6v3M0.3 11.5h11.6" stroke="#1a1a1a" stroke-width="1.3"/><circle cx="6.2" cy="11.5" r="1.3" fill="#1a1a1a"/></svg>
<div class="abs" style="left:1157px;top:382px;font-size:14.8px;line-height:20px;letter-spacing:0.5px;color:#1f1f1f"><span class="n1">1</span>0.<span class="n1">1</span>.0.0/<span class="n1">1</span>6</div>
<div class="abs" style="left:1264px;top:382px;font-size:14.6px;line-height:20px;color:#1f1f1f">-</div>
<div class="abs" style="left:508px;top:424px;width:16px;height:16px;border:1px solid #c9ccd3;border-radius:3px;background:#fff"></div>
<div class="abs" style="left:541px;top:430px;width:4px;height:4px;border-radius:2px;background:#9cc0d4"></div>
<div class="abs" style="left:555px;top:430px;width:4px;height:4px;border-radius:2px;background:#9cc0d4"></div>
<div class="abs" style="left:569px;top:422px;font-size:14.8px;line-height:20px;letter-spacing:0.5px;color:#236a96"><span class="n1">1</span>0.<span class="n1">1</span>.0.2/3<span class="n1">1</span></div>
<div class="abs" style="left:692px;top:422px;font-size:14.6px;line-height:20px;color:#1f1f1f">IP Prefix</div>
<div class="abs" style="left:791px;top:418px;width:75px;height:28px;border-radius:14px;background:#ebf9ad;color:#111;font-size:14.6px;line-height:28px;padding-left:10px">Address</div>
<div class="abs" style="left:853px;top:424px;width:100px;text-align:right;font-size:12.6px;line-height:16px;color:#6b7080">1 member</div>
<div class="abs" style="left:971px;top:428px;width:103px;height:8px;border-radius:4px;background:#c9d9e4;overflow:hidden"><div style="width:50%;height:8px;background:#26709e"></div></div>
<div class="abs" style="left:1052px;top:422px;width:60px;text-align:right;font-size:14.8px;line-height:20px;color:#236a96">50%</div>
<div class="abs" style="left:1131px;top:416px;width:105px;height:32px;border:1px solid #e0e3e8;border-radius:16px"></div>
<svg class="abs" style="left:1141px;top:425px" width="12" height="13" viewBox="0 0 12 13"><rect x="2.7" y="1.4" width="7" height="7.2" rx="1.3" fill="none" stroke="#1a1a1a" stroke-width="1.5"/><path d="M4.7 3.2v3.8M6.3 7V3.2h1.1a1.1 1.1 0 0 1 0 2.3H6.3" fill="none" stroke="#1a1a1a" stroke-width="1"/><path d="M6.2 8.6v3M0.3 11.5h11.6" stroke="#1a1a1a" stroke-width="1.3"/><circle cx="6.2" cy="11.5" r="1.3" fill="#1a1a1a"/></svg>
<div class="abs" style="left:1157px;top:422px;font-size:14.8px;line-height:20px;letter-spacing:0.5px;color:#1f1f1f"><span class="n1">1</span>0.<span class="n1">1</span>.0.0/<span class="n1">1</span>6</div>
<div class="abs" style="left:1264px;top:422px;font-size:14.6px;line-height:20px;color:#1f1f1f">-</div>
<div class="abs" style="left:508px;top:464px;width:16px;height:16px;border:1px solid #c9ccd3;border-radius:3px;background:#fff"></div>
<div class="abs" style="left:541px;top:470px;width:4px;height:4px;border-radius:2px;background:#9cc0d4"></div>
<div class="abs" style="left:555px;top:470px;width:4px;height:4px;border-radius:2px;background:#9cc0d4"></div>
<div class="abs" style="left:569px;top:462px;font-size:14.8px;line-height:20px;letter-spacing:0.5px;color:#236a96"><span class="n1">1</span>0.<span class="n1">1</span>.0.4/3<span class="n1">1</span></div>
<div class="abs" style="left:692px;top:462px;font-size:14.6px;line-height:20px;color:#1f1f1f">IP Prefix</div>
<div class="abs" style="left:791px;top:458px;width:75px;height:28px;border-radius:14px;background:#ebf9ad;color:#111;font-size:14.6px;line-height:28px;padding-left:10px">Address</div>
<div class="abs" style="left:853px;top:464px;width:100px;text-align:right;font-size:12.6px;line-height:16px;color:#6b7080">1 member</div>
<div class="abs" style="left:971px;top:468px;width:103px;height:8px;border-radius:4px;background:#c9d9e4;overflow:hidden"><div style="width:50%;height:8px;background:#26709e"></div></div>
<div class="abs" style="left:1052px;top:462px;width:60px;text-align:right;font-size:14.8px;line-height:20px;color:#236a96">50%</div>
<div class="abs" style="left:1131px;top:456px;width:105px;height:32px;border:1px solid #e0e3e8;border-radius:16px"></div>
<svg class="abs" style="left:1141px;top:465px" width="12" height="13" viewBox="0 0 12 13"><rect x="2.7" y="1.4" width="7" height="7.2" rx="1.3" fill="none" stroke="#1a1a1a" stroke-width="1.5"/><path d="M4.7 3.2v3.8M6.3 7V3.2h1.1a1.1 1.1 0 0 1 0 2.3H6.3" fill="none" stroke="#1a1a1a" stroke-width="1"/><path d="M6.2 8.6v3M0.3 11.5h11.6" stroke="#1a1a1a" stroke-width="1.3"/><circle cx="6.2" cy="11.5" r="1.3" fill="#1a1a1a"/></svg>
<div class="abs" style="left:1157px;top:462px;font-size:14.8px;line-height:20px;letter-spacing:0.5px;color:#1f1f1f"><span class="n1">1</span>0.<span class="n1">1</span>.0.0/<span class="n1">1</span>6</div>
<div class="abs" style="left:1264px;top:462px;font-size:14.6px;line-height:20px;color:#1f1f1f">-</div>
<div class="abs" style="left:508px;top:504px;width:16px;height:16px;border:1px solid #c9ccd3;border-radius:3px;background:#fff"></div>
<div class="abs" style="left:541px;top:510px;width:4px;height:4px;border-radius:2px;background:#9cc0d4"></div>
<div class="abs" style="left:555px;top:510px;width:4px;height:4px;border-radius:2px;background:#9cc0d4"></div>
<div class="abs" style="left:569px;top:502px;font-size:14.8px;line-height:20px;letter-spacing:0.5px;color:#236a96"><span class="n1">1</span>0.<span class="n1">1</span>.0.6/3<span class="n1">1</span></div>
<div class="abs" style="left:692px;top:502px;font-size:14.6px;line-height:20px;color:#1f1f1f">IP Prefix</div>
<div class="abs" style="left:791px;top:498px;width:75px;height:28px;border-radius:14px;background:#ebf9ad;color:#111;font-size:14.6px;line-height:28px;padding-left:10px">Address</div>
<div class="abs" style="left:853px;top:504px;width:100px;text-align:right;font-size:12.6px;line-height:16px;color:#6b7080">1 member</div>
<div class="abs" style="left:971px;top:508px;width:103px;height:8px;border-radius:4px;background:#c9d9e4;overflow:hidden"><div style="width:50%;height:8px;background:#26709e"></div></div>
<div class="abs" style="left:1052px;top:502px;width:60px;text-align:right;font-size:14.8px;line-height:20px;color:#236a96">50%</div>
<div class="abs" style="left:1131px;top:496px;width:105px;height:32px;border:1px solid #e0e3e8;border-radius:16px"></div>
<svg class="abs" style="left:1141px;top:505px" width="12" height="13" viewBox="0 0 12 13"><rect x="2.7" y="1.4" width="7" height="7.2" rx="1.3" fill="none" stroke="#1a1a1a" stroke-width="1.5"/><path d="M4.7 3.2v3.8M6.3 7V3.2h1.1a1.1 1.1 0 0 1 0 2.3H6.3" fill="none" stroke="#1a1a1a" stroke-width="1"/><path d="M6.2 8.6v3M0.3 11.5h11.6" stroke="#1a1a1a" stroke-width="1.3"/><circle cx="6.2" cy="11.5" r="1.3" fill="#1a1a1a"/></svg>
<div class="abs" style="left:1157px;top:502px;font-size:14.8px;line-height:20px;letter-spacing:0.5px;color:#1f1f1f"><span class="n1">1</span>0.<span class="n1">1</span>.0.0/<span class="n1">1</span>6</div>
<div class="abs" style="left:1264px;top:502px;font-size:14.6px;line-height:20px;color:#1f1f1f">-</div>
<div class="abs" style="left:508px;top:544px;width:16px;height:16px;border:1px solid #c9ccd3;border-radius:3px;background:#fff"></div>
<div class="abs" style="left:541px;top:550px;width:4px;height:4px;border-radius:2px;background:#9cc0d4"></div>
<div class="abs" style="left:555px;top:550px;width:4px;height:4px;border-radius:2px;background:#9cc0d4"></div>
<div class="abs" style="left:569px;top:542px;font-size:14.8px;line-height:20px;letter-spacing:0.5px;color:#236a96"><span class="n1">1</span>0.<span class="n1">1</span>.0.8/3<span class="n1">1</span></div>
<div class="abs" style="left:692px;top:542px;font-size:14.6px;line-height:20px;color:#1f1f1f">IP Prefix</div>
<div class="abs" style="left:791px;top:538px;width:75px;height:28px;border-radius:14px;background:#ebf9ad;color:#111;font-size:14.6px;line-height:28px;padding-left:10px">Address</div>
<div class="abs" style="left:853px;top:544px;width:100px;text-align:right;font-size:12.6px;line-height:16px;color:#6b7080">1 member</div>
<div class="abs" style="left:971px;top:548px;width:103px;height:8px;border-radius:4px;background:#c9d9e4;overflow:hidden"><div style="width:50%;height:8px;background:#26709e"></div></div>
<div class="abs" style="left:1052px;top:542px;width:60px;text-align:right;font-size:14.8px;line-height:20px;color:#236a96">50%</div>
<div class="abs" style="left:1131px;top:536px;width:105px;height:32px;border:1px solid #e0e3e8;border-radius:16px"></div>
<svg class="abs" style="left:1141px;top:545px" width="12" height="13" viewBox="0 0 12 13"><rect x="2.7" y="1.4" width="7" height="7.2" rx="1.3" fill="none" stroke="#1a1a1a" stroke-width="1.5"/><path d="M4.7 3.2v3.8M6.3 7V3.2h1.1a1.1 1.1 0 0 1 0 2.3H6.3" fill="none" stroke="#1a1a1a" stroke-width="1"/><path d="M6.2 8.6v3M0.3 11.5h11.6" stroke="#1a1a1a" stroke-width="1.3"/><circle cx="6.2" cy="11.5" r="1.3" fill="#1a1a1a"/></svg>
<div class="abs" style="left:1157px;top:542px;font-size:14.8px;line-height:20px;letter-spacing:0.5px;color:#1f1f1f"><span class="n1">1</span>0.<span class="n1">1</span>.0.0/<span class="n1">1</span>6</div>
<div class="abs" style="left:1264px;top:542px;font-size:14.6px;line-height:20px;color:#1f1f1f">-</div>
<div class="abs" style="left:508px;top:584px;width:16px;height:16px;border:1px solid #c9ccd3;border-radius:3px;background:#fff"></div>
<div class="abs" style="left:541px;top:590px;width:4px;height:4px;border-radius:2px;background:#9cc0d4"></div>
<div class="abs" style="left:555px;top:590px;width:4px;height:4px;border-radius:2px;background:#9cc0d4"></div>
<div class="abs" style="left:569px;top:582px;font-size:14.8px;line-height:20px;letter-spacing:0.5px;color:#236a96"><span class="n1">1</span>0.<span class="n1">1</span>.0.<span class="n1">1</span>0/3<span class="n1">1</span></div>
<div class="abs" style="left:692px;top:582px;font-size:14.6px;line-height:20px;color:#1f1f1f">IP Prefix</div>
<div class="abs" style="left:791px;top:578px;width:75px;height:28px;border-radius:14px;background:#ebf9ad;color:#111;font-size:14.6px;line-height:28px;padding-left:10px">Address</div>
<div class="abs" style="left:853px;top:584px;width:100px;text-align:right;font-size:12.6px;line-height:16px;color:#6b7080">1 member</div>
<div class="abs" style="left:971px;top:588px;width:103px;height:8px;border-radius:4px;background:#c9d9e4;overflow:hidden"><div style="width:50%;height:8px;background:#26709e"></div></div>
<div class="abs" style="left:1052px;top:582px;width:60px;text-align:right;font-size:14.8px;line-height:20px;color:#236a96">50%</div>
<div class="abs" style="left:1131px;top:576px;width:105px;height:32px;border:1px solid #e0e3e8;border-radius:16px"></div>
<svg class="abs" style="left:1141px;top:585px" width="12" height="13" viewBox="0 0 12 13"><rect x="2.7" y="1.4" width="7" height="7.2" rx="1.3" fill="none" stroke="#1a1a1a" stroke-width="1.5"/><path d="M4.7 3.2v3.8M6.3 7V3.2h1.1a1.1 1.1 0 0 1 0 2.3H6.3" fill="none" stroke="#1a1a1a" stroke-width="1"/><path d="M6.2 8.6v3M0.3 11.5h11.6" stroke="#1a1a1a" stroke-width="1.3"/><circle cx="6.2" cy="11.5" r="1.3" fill="#1a1a1a"/></svg>
<div class="abs" style="left:1157px;top:582px;font-size:14.8px;line-height:20px;letter-spacing:0.5px;color:#1f1f1f"><span class="n1">1</span>0.<span class="n1">1</span>.0.0/<span class="n1">1</span>6</div>
<div class="abs" style="left:1264px;top:582px;font-size:14.6px;line-height:20px;color:#1f1f1f">-</div>
<div class="abs" style="left:508px;top:624px;width:16px;height:16px;border:1px solid #c9ccd3;border-radius:3px;background:#fff"></div>
<div class="abs" style="left:541px;top:630px;width:4px;height:4px;border-radius:2px;background:#9cc0d4"></div>
<div class="abs" style="left:555px;top:630px;width:4px;height:4px;border-radius:2px;background:#9cc0d4"></div>
<div class="abs" style="left:569px;top:622px;font-size:14.8px;line-height:20px;letter-spacing:0.5px;color:#236a96"><span class="n1">1</span>0.<span class="n1">1</span>.0.<span class="n1">1</span>2/3<span class="n1">1</span></div>
<div class="abs" style="left:692px;top:622px;font-size:14.6px;line-height:20px;color:#1f1f1f">IP Prefix</div>
<div class="abs" style="left:791px;top:618px;width:75px;height:28px;border-radius:14px;background:#ebf9ad;color:#111;font-size:14.6px;line-height:28px;padding-left:10px">Address</div>
<div class="abs" style="left:853px;top:624px;width:100px;text-align:right;font-size:12.6px;line-height:16px;color:#6b7080">1 member</div>
<div class="abs" style="left:971px;top:628px;width:103px;height:8px;border-radius:4px;background:#c9d9e4;overflow:hidden"><div style="width:50%;height:8px;background:#26709e"></div></div>
<div class="abs" style="left:1052px;top:622px;width:60px;text-align:right;font-size:14.8px;line-height:20px;color:#236a96">50%</div>
<div class="abs" style="left:1131px;top:616px;width:105px;height:32px;border:1px solid #e0e3e8;border-radius:16px"></div>
<svg class="abs" style="left:1141px;top:625px" width="12" height="13" viewBox="0 0 12 13"><rect x="2.7" y="1.4" width="7" height="7.2" rx="1.3" fill="none" stroke="#1a1a1a" stroke-width="1.5"/><path d="M4.7 3.2v3.8M6.3 7V3.2h1.1a1.1 1.1 0 0 1 0 2.3H6.3" fill="none" stroke="#1a1a1a" stroke-width="1"/><path d="M6.2 8.6v3M0.3 11.5h11.6" stroke="#1a1a1a" stroke-width="1.3"/><circle cx="6.2" cy="11.5" r="1.3" fill="#1a1a1a"/></svg>
<div class="abs" style="left:1157px;top:622px;font-size:14.8px;line-height:20px;letter-spacing:0.5px;color:#1f1f1f"><span class="n1">1</span>0.<span class="n1">1</span>.0.0/<span class="n1">1</span>6</div>
<div class="abs" style="left:1264px;top:622px;font-size:14.6px;line-height:20px;color:#1f1f1f">-</div>
<div class="abs" style="left:508px;top:664px;width:16px;height:16px;border:1px solid #c9ccd3;border-radius:3px;background:#fff"></div>
<div class="abs" style="left:541px;top:670px;width:4px;height:4px;border-radius:2px;background:#9cc0d4"></div>
<div class="abs" style="left:555px;top:670px;width:4px;height:4px;border-radius:2px;background:#9cc0d4"></div>
<div class="abs" style="left:569px;top:662px;font-size:14.8px;line-height:20px;letter-spacing:0.5px;color:#236a96"><span class="n1">1</span>0.<span class="n1">1</span>.0.<span class="n1">1</span>4/3<span class="n1">1</span></div>
<div class="abs" style="left:692px;top:662px;font-size:14.6px;line-height:20px;color:#1f1f1f">IP Prefix</div>
<div class="abs" style="left:791px;top:658px;width:75px;height:28px;border-radius:14px;background:#ebf9ad;color:#111;font-size:14.6px;line-height:28px;padding-left:10px">Address</div>
<div class="abs" style="left:853px;top:664px;width:100px;text-align:right;font-size:12.6px;line-height:16px;color:#6b7080">1 member</div>
<div class="abs" style="left:971px;top:668px;width:103px;height:8px;border-radius:4px;background:#c9d9e4;overflow:hidden"><div style="width:50%;height:8px;background:#26709e"></div></div>
<div class="abs" style="left:1052px;top:662px;width:60px;text-align:right;font-size:14.8px;line-height:20px;color:#236a96">50%</div>
<div class="abs" style="left:1131px;top:656px;width:105px;height:32px;border:1px solid #e0e3e8;border-radius:16px"></div>
<svg class="abs" style="left:1141px;top:665px" width="12" height="13" viewBox="0 0 12 13"><rect x="2.7" y="1.4" width="7" height="7.2" rx="1.3" fill="none" stroke="#1a1a1a" stroke-width="1.5"/><path d="M4.7 3.2v3.8M6.3 7V3.2h1.1a1.1 1.1 0 0 1 0 2.3H6.3" fill="none" stroke="#1a1a1a" stroke-width="1"/><path d="M6.2 8.6v3M0.3 11.5h11.6" stroke="#1a1a1a" stroke-width="1.3"/><circle cx="6.2" cy="11.5" r="1.3" fill="#1a1a1a"/></svg>
<div class="abs" style="left:1157px;top:662px;font-size:14.8px;line-height:20px;letter-spacing:0.5px;color:#1f1f1f"><span class="n1">1</span>0.<span class="n1">1</span>.0.0/<span class="n1">1</span>6</div>
<div class="abs" style="left:1264px;top:662px;font-size:14.6px;line-height:20px;color:#1f1f1f">-</div>
<div class="abs" style="left:508px;top:704px;width:16px;height:16px;border:1px solid #c9ccd3;border-radius:3px;background:#fff"></div>
<div class="abs" style="left:541px;top:710px;width:4px;height:4px;border-radius:2px;background:#9cc0d4"></div>
<div class="abs" style="left:555px;top:710px;width:4px;height:4px;border-radius:2px;background:#9cc0d4"></div>
<div class="abs" style="left:569px;top:702px;font-size:14.8px;line-height:20px;letter-spacing:0.5px;color:#236a96"><span class="n1">1</span>0.<span class="n1">1</span>.0.<span class="n1">1</span>6/3<span class="n1">1</span></div>
<div class="abs" style="left:692px;top:702px;font-size:14.6px;line-height:20px;color:#1f1f1f">IP Prefix</div>
<div class="abs" style="left:791px;top:698px;width:75px;height:28px;border-radius:14px;background:#ebf9ad;color:#111;font-size:14.6px;line-height:28px;padding-left:10px">Address</div>
<div class="abs" style="left:853px;top:704px;width:100px;text-align:right;font-size:12.6px;line-height:16px;color:#6b7080">1 member</div>
<div class="abs" style="left:971px;top:708px;width:103px;height:8px;border-radius:4px;background:#c9d9e4;overflow:hidden"><div style="width:50%;height:8px;background:#26709e"></div></div>
<div class="abs" style="left:1052px;top:702px;width:60px;text-align:right;font-size:14.8px;line-height:20px;color:#236a96">50%</div>
<div class="abs" style="left:1131px;top:696px;width:105px;height:32px;border:1px solid #e0e3e8;border-radius:16px"></div>
<svg class="abs" style="left:1141px;top:705px" width="12" height="13" viewBox="0 0 12 13"><rect x="2.7" y="1.4" width="7" height="7.2" rx="1.3" fill="none" stroke="#1a1a1a" stroke-width="1.5"/><path d="M4.7 3.2v3.8M6.3 7V3.2h1.1a1.1 1.1 0 0 1 0 2.3H6.3" fill="none" stroke="#1a1a1a" stroke-width="1"/><path d="M6.2 8.6v3M0.3 11.5h11.6" stroke="#1a1a1a" stroke-width="1.3"/><circle cx="6.2" cy="11.5" r="1.3" fill="#1a1a1a"/></svg>
<div class="abs" style="left:1157px;top:702px;font-size:14.8px;line-height:20px;letter-spacing:0.5px;color:#1f1f1f"><span class="n1">1</span>0.<span class="n1">1</span>.0.0/<span class="n1">1</span>6</div>
<div class="abs" style="left:1264px;top:702px;font-size:14.6px;line-height:20px;color:#1f1f1f">-</div>
<div class="abs" style="left:508px;top:744px;width:16px;height:16px;border:1px solid #c9ccd3;border-radius:3px;background:#fff"></div>
<div class="abs" style="left:541px;top:750px;width:4px;height:4px;border-radius:2px;background:#9cc0d4"></div>
<div class="abs" style="left:555px;top:750px;width:4px;height:4px;border-radius:2px;background:#9cc0d4"></div>
<div class="abs" style="left:569px;top:742px;font-size:14.8px;line-height:20px;letter-spacing:0.5px;color:#236a96"><span class="n1">1</span>0.<span class="n1">1</span>.0.<span class="n1">1</span>8/3<span class="n1">1</span></div>
<div class="abs" style="left:692px;top:742px;font-size:14.6px;line-height:20px;color:#1f1f1f">IP Prefix</div>
<div class="abs" style="left:791px;top:738px;width:75px;height:28px;border-radius:14px;background:#ebf9ad;color:#111;font-size:14.6px;line-height:28px;padding-left:10px">Address</div>
<div class="abs" style="left:853px;top:744px;width:100px;text-align:right;font-size:12.6px;line-height:16px;color:#6b7080">1 member</div>
<div class="abs" style="left:971px;top:748px;width:103px;height:8px;border-radius:4px;background:#c9d9e4;overflow:hidden"><div style="width:50%;height:8px;background:#26709e"></div></div>
<div class="abs" style="left:1052px;top:742px;width:60px;text-align:right;font-size:14.8px;line-height:20px;color:#236a96">50%</div>
<div class="abs" style="left:1131px;top:736px;width:105px;height:32px;border:1px solid #e0e3e8;border-radius:16px"></div>
<svg class="abs" style="left:1141px;top:745px" width="12" height="13" viewBox="0 0 12 13"><rect x="2.7" y="1.4" width="7" height="7.2" rx="1.3" fill="none" stroke="#1a1a1a" stroke-width="1.5"/><path d="M4.7 3.2v3.8M6.3 7V3.2h1.1a1.1 1.1 0 0 1 0 2.3H6.3" fill="none" stroke="#1a1a1a" stroke-width="1"/><path d="M6.2 8.6v3M0.3 11.5h11.6" stroke="#1a1a1a" stroke-width="1.3"/><circle cx="6.2" cy="11.5" r="1.3" fill="#1a1a1a"/></svg>
<div class="abs" style="left:1157px;top:742px;font-size:14.8px;line-height:20px;letter-spacing:0.5px;color:#1f1f1f"><span class="n1">1</span>0.<span class="n1">1</span>.0.0/<span class="n1">1</span>6</div>
<div class="abs" style="left:1264px;top:742px;font-size:14.6px;line-height:20px;color:#1f1f1f">-</div>
<div class="abs" style="left:508px;top:784px;width:16px;height:16px;border:1px solid #c9ccd3;border-radius:3px;background:#fff"></div>
<div class="abs" style="left:541px;top:790px;width:4px;height:4px;border-radius:2px;background:#9cc0d4"></div>
<div class="abs" style="left:555px;top:790px;width:4px;height:4px;border-radius:2px;background:#9cc0d4"></div>
<div class="abs" style="left:569px;top:782px;font-size:14.8px;line-height:20px;letter-spacing:0.5px;color:#236a96"><span class="n1">1</span>0.<span class="n1">1</span>.0.20/3<span class="n1">1</span></div>
<div class="abs" style="left:692px;top:782px;font-size:14.6px;line-height:20px;color:#1f1f1f">IP Prefix</div>
<div class="abs" style="left:791px;top:778px;width:75px;height:28px;border-radius:14px;background:#ebf9ad;color:#111;font-size:14.6px;line-height:28px;padding-left:10px">Address</div>
<div class="abs" style="left:853px;top:784px;width:100px;text-align:right;font-size:12.6px;line-height:16px;color:#6b7080">2 members</div>
<div class="abs" style="left:971px;top:788px;width:97px;height:8px;border-radius:4px;background:#c9d9e4;overflow:hidden"><div style="width:100%;height:8px;background:#26709e"></div></div>
<div class="abs" style="left:1052px;top:782px;width:60px;text-align:right;font-size:14.8px;line-height:20px;color:#236a96">100%</div>
<div class="abs" style="left:1131px;top:776px;width:105px;height:32px;border:1px solid #e0e3e8;border-radius:16px"></div>
<svg class="abs" style="left:1141px;top:785px" width="12" height="13" viewBox="0 0 12 13"><rect x="2.7" y="1.4" width="7" height="7.2" rx="1.3" fill="none" stroke="#1a1a1a" stroke-width="1.5"/><path d="M4.7 3.2v3.8M6.3 7V3.2h1.1a1.1 1.1 0 0 1 0 2.3H6.3" fill="none" stroke="#1a1a1a" stroke-width="1"/><path d="M6.2 8.6v3M0.3 11.5h11.6" stroke="#1a1a1a" stroke-width="1.3"/><circle cx="6.2" cy="11.5" r="1.3" fill="#1a1a1a"/></svg>
<div class="abs" style="left:1157px;top:782px;font-size:14.8px;line-height:20px;letter-spacing:0.5px;color:#1f1f1f"><span class="n1">1</span>0.<span class="n1">1</span>.0.0/<span class="n1">1</span>6</div>
<div class="abs" style="left:1264px;top:782px;font-size:14.6px;line-height:20px;color:#1f1f1f">-</div>
<div class="abs" style="left:508px;top:824px;width:16px;height:16px;border:1px solid #c9ccd3;border-radius:3px;background:#fff"></div>
<div class="abs" style="left:541px;top:830px;width:4px;height:4px;border-radius:2px;background:#9cc0d4"></div>
<div class="abs" style="left:555px;top:830px;width:4px;height:4px;border-radius:2px;background:#9cc0d4"></div>
<div class="abs" style="left:569px;top:822px;font-size:14.8px;line-height:20px;letter-spacing:0.5px;color:#236a96"><span class="n1">1</span>0.<span class="n1">1</span>.0.22/3<span class="n1">1</span></div>
<div class="abs" style="left:692px;top:822px;font-size:14.6px;line-height:20px;color:#1f1f1f">IP Prefix</div>
<div class="abs" style="left:791px;top:818px;width:75px;height:28px;border-radius:14px;background:#ebf9ad;color:#111;font-size:14.6px;line-height:28px;padding-left:10px">Address</div>
<div class="abs" style="left:853px;top:824px;width:100px;text-align:right;font-size:12.6px;line-height:16px;color:#6b7080">2 members</div>
<div class="abs" style="left:971px;top:828px;width:97px;height:8px;border-radius:4px;background:#c9d9e4;overflow:hidden"><div style="width:100%;height:8px;background:#26709e"></div></div>
<div class="abs" style="left:1052px;top:822px;width:60px;text-align:right;font-size:14.8px;line-height:20px;color:#236a96">100%</div>
<div class="abs" style="left:1131px;top:816px;width:105px;height:32px;border:1px solid #e0e3e8;border-radius:16px"></div>
<svg class="abs" style="left:1141px;top:825px" width="12" height="13" viewBox="0 0 12 13"><rect x="2.7" y="1.4" width="7" height="7.2" rx="1.3" fill="none" stroke="#1a1a1a" stroke-width="1.5"/><path d="M4.7 3.2v3.8M6.3 7V3.2h1.1a1.1 1.1 0 0 1 0 2.3H6.3" fill="none" stroke="#1a1a1a" stroke-width="1"/><path d="M6.2 8.6v3M0.3 11.5h11.6" stroke="#1a1a1a" stroke-width="1.3"/><circle cx="6.2" cy="11.5" r="1.3" fill="#1a1a1a"/></svg>
<div class="abs" style="left:1157px;top:822px;font-size:14.8px;line-height:20px;letter-spacing:0.5px;color:#1f1f1f"><span class="n1">1</span>0.<span class="n1">1</span>.0.0/<span class="n1">1</span>6</div>
<div class="abs" style="left:1264px;top:822px;font-size:14.6px;line-height:20px;color:#1f1f1f">-</div>
<div class="abs" style="left:508px;top:864px;width:16px;height:16px;border:1px solid #c9ccd3;border-radius:3px;background:#fff"></div>
<div class="abs" style="left:541px;top:870px;width:4px;height:4px;border-radius:2px;background:#9cc0d4"></div>
<div class="abs" style="left:555px;top:870px;width:4px;height:4px;border-radius:2px;background:#9cc0d4"></div>
<div class="abs" style="left:569px;top:862px;font-size:14.8px;line-height:20px;letter-spacing:0.5px;color:#236a96"><span class="n1">1</span>0.<span class="n1">1</span>.0.24/3<span class="n1">1</span></div>
<div class="abs" style="left:692px;top:862px;font-size:14.6px;line-height:20px;color:#1f1f1f">IP Prefix</div>
<div class="abs" style="left:791px;top:858px;width:75px;height:28px;border-radius:14px;background:#ebf9ad;color:#111;font-size:14.6px;line-height:28px;padding-left:10px">Address</div>
<div class="abs" style="left:853px;top:864px;width:100px;text-align:right;font-size:12.6px;line-height:16px;color:#6b7080">2 members</div>
<div class="abs" style="left:971px;top:868px;width:97px;height:8px;border-radius:4px;background:#c9d9e4;overflow:hidden"><div style="width:100%;height:8px;background:#26709e"></div></div>
<div class="abs" style="left:1052px;top:862px;width:60px;text-align:right;font-size:14.8px;line-height:20px;color:#236a96">100%</div>
<div class="abs" style="left:1131px;top:856px;width:105px;height:32px;border:1px solid #e0e3e8;border-radius:16px"></div>
<svg class="abs" style="left:1141px;top:865px" width="12" height="13" viewBox="0 0 12 13"><rect x="2.7" y="1.4" width="7" height="7.2" rx="1.3" fill="none" stroke="#1a1a1a" stroke-width="1.5"/><path d="M4.7 3.2v3.8M6.3 7V3.2h1.1a1.1 1.1 0 0 1 0 2.3H6.3" fill="none" stroke="#1a1a1a" stroke-width="1"/><path d="M6.2 8.6v3M0.3 11.5h11.6" stroke="#1a1a1a" stroke-width="1.3"/><circle cx="6.2" cy="11.5" r="1.3" fill="#1a1a1a"/></svg>
<div class="abs" style="left:1157px;top:862px;font-size:14.8px;line-height:20px;letter-spacing:0.5px;color:#1f1f1f"><span class="n1">1</span>0.<span class="n1">1</span>.0.0/<span class="n1">1</span>6</div>
<div class="abs" style="left:1264px;top:862px;font-size:14.6px;line-height:20px;color:#1f1f1f">-</div>
<div class="abs" style="left:259px;top:859px;width:1443px;height:1px;background:#e2e4e8"></div>
<div id="ov"></div>
<div id="panel">
<div class="abs" style="left:0;top:0;width:397px;height:144px;background:#f8f9fb"></div>
<div class="abs" style="left:0;top:144px;width:397px;height:96px;background:#e4e5ea"></div>
<div class="abs" style="left:16px;top:16px;width:58px;height:28px;border-radius:7px;background:#e2e9f0"></div>
<svg class="abs" style="left:24px;top:23px" width="11" height="14" viewBox="0 0 11 14"><path d="M5.5 0.5L10.5 3.5 5.5 6.5 0.5 3.5z" fill="#236a96"/><path d="M0.8 6.6L5.5 9.4 10.2 6.6M0.8 9.4L5.5 12.2 10.2 9.4" fill="none" stroke="#236a96" stroke-width="1.3"/></svg>
<div class="abs" style="left:39px;top:21px;font-size:13.2px;line-height:18px;color:#236a96;-webkit-text-stroke:0.35px #236a96">main</div>
<div class="abs" style="left:356px;top:16px;width:28px;height:28px;border-radius:50%;background:#fff;border:1px solid #e3e5ea;font-size:14px;font-weight:bold;line-height:26px;text-align:center;color:#111">?</div>
<div class="abs" style="left:16px;top:52px;font-size:14.4px;line-height:20px;color:#1f1f1f">IP Prefix</div>
<svg class="abs" style="left:82px;top:57px" width="8" height="10" viewBox="0 0 8 10"><path d="M2.5 2l3 3-3 3" fill="none" stroke="#1f1f1f" stroke-width="1.3"/></svg>
<div class="abs" style="left:101px;top:52px;font-size:14.4px;line-height:20px;color:#1f1f1f">New</div>
<div class="abs" style="left:16px;top:83px;font-size:18px;line-height:22px;font-weight:bold;color:#111">Create IP Prefix</div>
<div class="abs" style="left:16px;top:108px;font-size:15px;line-height:20px;color:#1f1f1f">IPv6 or IPv4 prefix also referred as network</div>

<div class="abs lbl" style="left:16px;top:164px">Select an object type</div>
<div class="abs sel" style="left:16px;top:185px;height:40px"></div>
<div class="abs" style="left:25px;top:195px;font-size:14.6px;line-height:20px;color:#111">IP Prefix</div>
<div class="abs ipam" style="left:310px;top:194px">Ipam</div>
<svg class="abs chev" style="left:364px;top:197px" width="8" height="16" viewBox="0 0 8 16"><path d="M1.5 6l2.5-2.5 2.5 2.5M1.5 10l2.5 2.5 2.5-2.5" fill="none" stroke="#555" stroke-width="1.1"/></svg>

<div class="abs lbl" style="left:16px;top:255px">Prefix *</div>
<div class="abs sel" style="left:16px;top:281px;height:40px"></div>
<div class="abs" style="left:25px;top:291px;font-size:14px;line-height:20px;color:#111">10.100.1.0/24</div>

<div class="abs lbl" style="left:16px;top:335px">Description</div>
<div class="abs sel" style="left:16px;top:361px;height:40px"></div>

<div class="abs lbl" style="left:16px;top:415px">Member Type</div>
<div class="abs sel" style="left:16px;top:441px;height:40px;background:#e8644f;border-color:#e35b45"></div>
<div class="abs" style="left:25px;top:451px;font-size:14.6px;line-height:20px;color:#111">Prefix</div>
<svg class="abs chev" style="left:364px;top:453px" width="8" height="16" viewBox="0 0 8 16"><path d="M1.5 6l2.5-2.5 2.5 2.5M1.5 10l2.5 2.5 2.5-2.5" fill="none" stroke="#444" stroke-width="1.1"/></svg>

<div class="abs" style="left:16px;top:509px;width:16px;height:16px;border:1px solid #2b2f3a;border-radius:3px;background:#fff"></div>
<div class="abs" style="left:40px;top:508px;font-size:14.5px;line-height:20px;color:#1f1f1f;-webkit-text-stroke:0.2px #1f1f1f">Is Pool</div>
<div class="abs qm" style="left:92px;top:508px">?</div>

<div class="abs lbl" style="left:16px;top:551px">IP Namespace</div>
<div class="abs" style="left:16px;top:576px;font-size:12.8px;line-height:18px;color:#1f1f1f">Kind</div>
<div class="abs qm" style="left:50px;top:576px">?</div>
<div class="abs sel" style="left:16px;top:597px;height:40px"></div>
<div class="abs" style="left:25px;top:606px;font-size:14.6px;line-height:20px;color:#111">IPAM Namespace</div>
<div class="abs ipam" style="left:310px;top:606px">Ipam</div>
<svg class="abs chev" style="left:364px;top:609px" width="8" height="16" viewBox="0 0 8 16"><path d="M1.5 6l2.5-2.5 2.5 2.5M1.5 10l2.5 2.5 2.5-2.5" fill="none" stroke="#555" stroke-width="1.1"/></svg>
<div class="abs" style="left:16px;top:643px;font-size:12.5px;line-height:18px;color:#1f1f1f">IPAM Namespace</div>
<div class="abs sel" style="left:16px;top:673px;height:40px"></div>
<svg class="abs chev" style="left:364px;top:685px" width="8" height="16" viewBox="0 0 8 16"><path d="M1.5 6l2.5-2.5 2.5 2.5M1.5 10l2.5 2.5 2.5-2.5" fill="none" stroke="#555" stroke-width="1.1"/></svg>

<div class="abs lbl" style="left:16px;top:727px">Member Of Groups</div>
<div class="abs sel" style="left:16px;top:753px;height:40px"></div>
<svg class="abs chev" style="left:364px;top:765px" width="8" height="16" viewBox="0 0 8 16"><path d="M1.5 6l2.5-2.5 2.5 2.5M1.5 10l2.5 2.5 2.5-2.5" fill="none" stroke="#555" stroke-width="1.1"/></svg>

<div class="abs" style="left:229px;top:809px;width:80px;height:36px;border:1px solid #e0e3e8;border-radius:6px;background:#fff;font-size:15px;line-height:34px;text-align:center;color:#111">Cancel</div>
<div class="abs" style="left:317px;top:809px;width:67px;height:36px;border-radius:6px;background:#236a96;font-size:15px;line-height:36px;text-align:center;color:#fff">Save</div>
</div>

</div></body></html>
